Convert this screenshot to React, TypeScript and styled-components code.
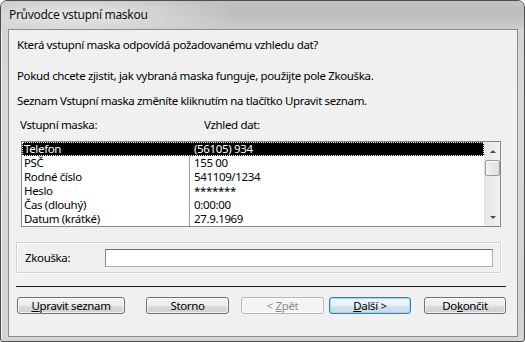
import styled, { createGlobalStyle } from "styled-components";

const Global = createGlobalStyle`
  html, body {
    margin: 0;
    padding: 0;
    background: #ffffff;
  }
  * {
    box-sizing: border-box;
  }
`;

const font = `"Noto Sans", "Open Sans", "DejaVu Sans", sans-serif`;

const Window = styled.div`
  width: 525px;
  height: 342px;
  border: 1px solid #4e4e4e;
  border-radius: 7px 7px 3px 3px;
  background: linear-gradient(to bottom, #d2d2d2 0%, #d9d9d9 30%, #d4d4d4 100%);
  padding: 0 6px 4px 7px;
  display: flex;
  flex-direction: column;
  font-family: ${font};
  font-size: 11.5px;
  letter-spacing: -0.35px;
  color: #000;
  box-shadow: inset 1px 1px 0 rgba(255, 255, 255, 0.6);
  overflow: hidden;
`;

const TitleBar = styled.div`
  height: 28px;
  flex: none;
  display: flex;
  align-items: center;
  padding-bottom: 1px;
  margin: 0 -6px 0 -7px;
  padding-left: 8px;
  background:
    radial-gradient(ellipse 170px 22px at 70px 14px, rgba(236, 236, 236, 0.95), rgba(236, 236, 236, 0) 100%),
    linear-gradient(to bottom, #c2c2c2 0%, #bcbcbc 45%, #cdcdcd 100%);
`;

const Title = styled.span`
  font-size: 12px;
  letter-spacing: -0.3px;
  color: #111;
`;

const Client = styled.div`
  flex: 1;
  border: 1px solid #8a8a8a;
  background: #f0f0f0;
  display: flex;
  flex-direction: column;
`;

const Para = styled.div<{ $top: number }>`
  margin: ${(p) => p.$top}px 0 0 8px;
  height: 15px;
  line-height: 15px;
  white-space: nowrap;
`;

const Labels = styled.div`
  margin: 9px 0 0 11px;
  height: 15px;
  line-height: 15px;
  display: grid;
  grid-template-columns: 184px auto;
`;

const ListBox = styled.div`
  margin: 9px 0 0 12px;
  width: 480px;
  height: 86px;
  border: 1px solid #828790;
  background: #fff;
  display: flex;
`;

const Rows = styled.div`
  flex: 1;
  position: relative;
  display: flex;
  flex-direction: column;
`;

const ColumnLine = styled.div`
  position: absolute;
  left: 167px;
  top: 0;
  bottom: 0;
  width: 1px;
  background: #a0a0a0;
`;

const Row = styled.div<{ $selected?: boolean }>`
  height: 14px;
  line-height: 12px;
  display: grid;
  grid-template-columns: 168px auto;
  position: relative;
  background: ${(p) => (p.$selected ? "#000" : "transparent")};
  color: ${(p) => (p.$selected ? "#fff" : "#000")};
  border: 1px dotted ${(p) => (p.$selected ? "#fff" : "transparent")};
  z-index: ${(p) => (p.$selected ? 1 : 0)};
`;

const Cell = styled.span<{ $second?: boolean }>`
  padding-left: ${(p) => (p.$second ? 3 : 1)}px;
  white-space: nowrap;
`;

const ScrollBar = styled.div`
  width: 16px;
  flex: none;
  background: linear-gradient(to right, #e6e6e6, #f3f3f3);
  border-left: 1px solid #e2e2e2;
  display: flex;
  flex-direction: column;
  align-items: center;
`;

const Arrow = styled.div<{ $down?: boolean }>`
  height: 18px;
  width: 100%;
  display: flex;
  align-items: center;
  justify-content: center;
  &::after {
    content: "";
    border-left: 3px solid transparent;
    border-right: 3px solid transparent;
    ${(p) =>
      p.$down
        ? "border-top: 3px solid #4d4d4d;"
        : "border-bottom: 3px solid #4d4d4d;"}
  }
`;

const Thumb = styled.div`
  width: 15px;
  height: 16px;
  border: 1px solid #9a9a9a;
  border-radius: 2px;
  background: linear-gradient(to right, #f2f2f2, #e0e0e0);
  box-shadow: inset 1px 1px 0 #fff;
`;

const Spacer = styled.div`
  flex: 1;
`;

const GroupBox = styled.div`
  margin: 15px 0 0 7px;
  width: 485px;
  height: 31px;
  border: 1px solid #d3d3d3;
  box-shadow: inset 1px 1px 0 #fff, 1px 1px 0 #fff;
  display: flex;
  align-items: center;
  padding-left: 8px;
`;

const GroupLabel = styled.span`
  width: 80px;
`;

const TextInput = styled.div`
  width: 388px;
  height: 18px;
  border: 1px solid #abadb3;
  border-top-color: #6d6d6d;
  border-left-color: #8a8a8a;
  background: #fff;
`;

const Separator = styled.div`
  margin: 13px 0 0 7px;
  width: 490px;
  height: 1px;
  background: #1e1e1e;
`;

const Buttons = styled.div`
  margin: 10px 0 0 8px;
  display: flex;
  height: 17px;
`;

const Button = styled.div<{ $w: number; $gap: number; $default?: boolean; $disabled?: boolean }>`
  width: ${(p) => p.$w}px;
  margin-left: ${(p) => p.$gap}px;
  height: 17px;
  border: 1px solid ${(p) => (p.$default ? "#3c7fb1" : p.$disabled ? "#b8b8b8" : "#707070")};
  border-radius: 3px;
  background: ${(p) =>
    p.$disabled
      ? "#f4f4f4"
      : p.$default
        ? "linear-gradient(to bottom, #f2f8fc 0%, #e8f0f6 50%, #d3e4f0 51%, #c9dbe9 100%)"
        : "linear-gradient(to bottom, #f2f2f2 0%, #ebebeb 50%, #dddddd 51%, #cfcfcf 100%)"};
  box-shadow: inset 0 0 0 1px ${(p) => (p.$default ? "#9cd4f3" : "rgba(255,255,255,0.7)")};
  color: ${(p) => (p.$disabled ? "#8d8d8d" : "#000")};
  display: flex;
  align-items: center;
  justify-content: center;
  line-height: 14px;
`;

const Key = styled.span`
  text-decoration: underline;
  text-underline-offset: 1px;
`;

const rows = [
  ["Telefon", "(56105) 934"],
  ["PSČ", "155 00"],
  ["Rodné číslo", "541109/1234"],
  ["Heslo", "*******"],
  ["Čas (dlouhý)", "0:00:00"],
  ["Datum (krátké)", "27.9.1969"],
];

export default function App() {
  return (
    <>
      <Global />
      <Window>
        <TitleBar>
          <Title>Průvodce vstupní maskou</Title>
        </TitleBar>
        <Client>
          <Para $top={7}>Která vstupní maska odpovídá požadovanému vzhledu dat?</Para>
          <Para $top={16}>Pokud chcete zjistit, jak vybraná maska funguje, použijte pole Zkouška.</Para>
          <Para $top={10}>Seznam Vstupní maska změníte kliknutím na tlačítko Upravit seznam.</Para>
          <Labels>
            <span>Vstupní maska:</span>
            <span>Vzhled dat:</span>
          </Labels>

          <ListBox>
            <Rows>
              <ColumnLine />
              {rows.map(([name, sample], i) => (
                <Row key={name} $selected={i === 0}>
                  <Cell>{name}</Cell>
                  <Cell $second>{sample}</Cell>
                </Row>
              ))}
            </Rows>
            <ScrollBar>
              <Arrow />
              <Thumb />
              <Spacer />
              <Arrow $down />
            </ScrollBar>
          </ListBox>

          <GroupBox>
            <GroupLabel>Zkouška:</GroupLabel>
            <TextInput />
          </GroupBox>

          <Separator />

          <Buttons>
            <Button $w={108} $gap={0}>
              <span><Key>U</Key>pravit seznam</span>
            </Button>
            <Button $w={83} $gap={21}>Storno</Button>
            <Button $w={83} $gap={12} $disabled>
              <span>&lt; <Key>Z</Key>pět</span>
            </Button>
            <Button $w={82} $gap={5} $default>
              <span><Key>D</Key>alší &gt;</span>
            </Button>
            <Button $w={82} $gap={13}>
              <span>Do<Key>k</Key>ončit</span>
            </Button>
          </Buttons>
        </Client>
      </Window>
    </>
  );
}
